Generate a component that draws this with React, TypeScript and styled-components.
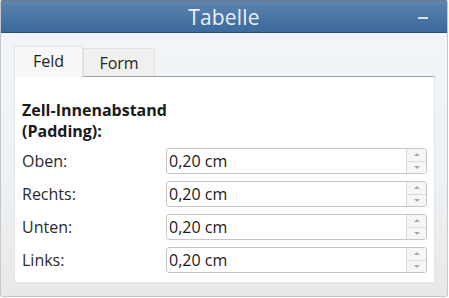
import React from "react";
import styled, { createGlobalStyle } from "styled-components";

const Global = createGlobalStyle`
  html, body { margin: 0; padding: 0; background: #ffffff; }
  body { font-family: "Open Sans", "Noto Sans", sans-serif; }
  * { box-sizing: border-box; }
`;

const Window = styled.div`
  width: 448px;
  height: 297px;
  display: flex;
  flex-direction: column;
  border: 1px solid #c4c7cb;
  border-top: none;
  border-radius: 2px 2px 3px 3px;
  background: linear-gradient(to bottom, #f1f6fc 0%, #eef2f6 55%, #e8e8e8 100%);
  overflow: hidden;
`;

const TitleBar = styled.div`
  height: 33px;
  flex: none;
  display: grid;
  grid-template-columns: 40px 1fr 40px;
  align-items: center;
  background: linear-gradient(to bottom, #5e84ae 0%, #4a76a5 50%, #3c6a9b 100%);
  border-top: 1px solid #6a7a8c;
  border-bottom: 1px solid #284c75;
  color: #e9eff6;
`;

const Title = styled.div`
  grid-column: 2;
  text-align: center;
  font-size: 21px;
  line-height: 30px;
  letter-spacing: 0.2px;
`;

const Minimize = styled.div`
  grid-column: 3;
  justify-self: start;
  width: 10px;
  height: 2px;
  margin-top: 3px;
  margin-left: 11px;
  background: #d8e2ee;
`;

const Body = styled.div`
  flex: 1;
  display: flex;
  flex-direction: column;
  padding: 13px 12px 13px 13px;
`;

const TabRow = styled.div`
  display: flex;
  align-items: flex-end;
  height: 30px;
  flex: none;
`;

const Tab = styled.div<{ $active?: boolean }>`
  height: ${(p) => (p.$active ? 31 : 28)}px;
  margin-bottom: ${(p) => (p.$active ? -1 : 0)}px;
  display: flex;
  align-items: center;
  justify-content: center;
  font-size: 16px;
  color: #1e1e1e;
  background: ${(p) => (p.$active ? "#f8f8f8" : "#f0f0f0")};
  border: 1px solid #e2e2e2;
  border-bottom: none;
  position: relative;
  z-index: ${(p) => (p.$active ? 2 : 1)};
  width: ${(p) => (p.$active ? 69 : 72)}px;
  padding-bottom: ${(p) => (p.$active ? 3 : 0)}px;
`;

const Panel = styled.div`
  flex: 1;
  background: #ffffff;
  border-top: 1px solid #a3a3a3;
  border-left: 1px solid #e4e4e4;
  border-right: 1px solid #e4e4e4;
  border-bottom: 1px solid #e4e4e4;
  padding: 23px 7px 0 7px;
  display: flex;
  flex-direction: column;
`;

const Heading = styled.div`
  font-weight: 700;
  font-size: 16px;
  line-height: 21px;
  color: #1a1a1a;
  margin-bottom: 6px;
`;

const Rows = styled.div`
  display: flex;
  flex-direction: column;
  gap: 7px;
`;

const Row = styled.div`
  display: grid;
  grid-template-columns: 144px 1fr;
  align-items: center;
  height: 26px;
`;

const Label = styled.div`
  font-size: 16px;
  line-height: 24px;
  color: #2a2a2a;
`;

const Field = styled.div`
  height: 26px;
  display: flex;
  border: 1px solid #c6c6c6;
  border-radius: 3px;
  background: #fff;
  overflow: hidden;
`;

const Value = styled.div`
  flex: 1;
  font-size: 16px;
  line-height: 24px;
  padding-left: 2px;
  color: #1a1a1a;
`;

const Spin = styled.div`
  width: 20px;
  display: flex;
  flex-direction: column;
  border-left: 1px solid #d6d6d6;
`;

const SpinHalf = styled.div<{ $down?: boolean }>`
  flex: 1;
  display: flex;
  align-items: center;
  justify-content: center;
  background: #f6f6f6;
  border-top: ${(p) => (p.$down ? "1px solid #dadada" : "none")};
`;

const Arrow = styled.div<{ $down?: boolean }>`
  width: 0;
  height: 0;
  border-left: 3px solid transparent;
  border-right: 3px solid transparent;
  ${(p) => (p.$down ? "border-top: 3px solid #a8a8a8;" : "border-bottom: 3px solid #a8a8a8;")}
`;

const rows = ["Oben:", "Rechts:", "Unten:", "Links:"];

export default function App() {
  return (
    <>
      <Global />
      <Window>
        <TitleBar>
          <Title>Tabelle</Title>
          <Minimize />
        </TitleBar>
        <Body>
          <TabRow>
            <Tab $active>Feld</Tab>
            <Tab>Form</Tab>
          </TabRow>
          <Panel>
            <Heading>
              Zell-Innenabstand
              <br />
              (Padding):
            </Heading>
            <Rows>
              {rows.map((r) => (
                <Row key={r}>
                  <Label>{r}</Label>
                  <Field>
                    <Value>0,20 cm</Value>
                    <Spin>
                      <SpinHalf>
                        <Arrow />
                      </SpinHalf>
                      <SpinHalf $down>
                        <Arrow $down />
                      </SpinHalf>
                    </Spin>
                  </Field>
                </Row>
              ))}
            </Rows>
          </Panel>
        </Body>
      </Window>
    </>
  );
}
